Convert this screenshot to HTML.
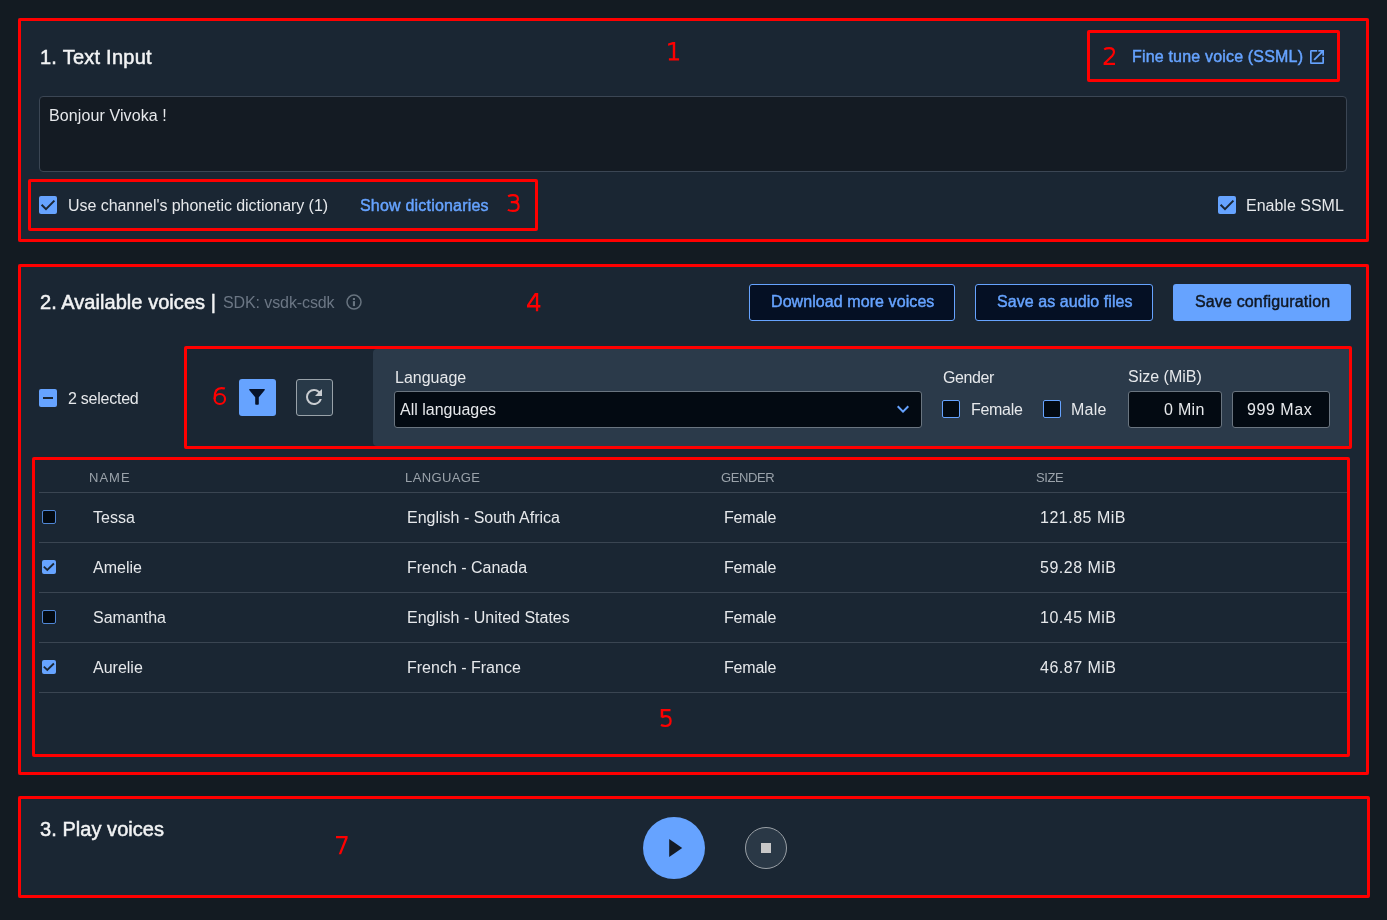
<!DOCTYPE html>
<html><head><meta charset="utf-8"><style>
html,body{margin:0;padding:0;}
body{width:1387px;height:920px;background:#131b22;position:relative;overflow:hidden;font-family:"Liberation Sans",sans-serif;}
body>div{position:absolute;}
.t{white-space:pre;line-height:1;will-change:transform;}
</style></head><body>
<div style="left:18px;top:18px;width:1351px;height:224px;background:#1a2633;"></div>
<div style="left:18px;top:264px;width:1351px;height:511px;background:#1a2633;"></div>
<div style="left:18px;top:796px;width:1351px;height:102px;background:#1a2633;"></div>
<div class="t" style="left:40px;top:47.27px;font-size:20px;color:#f2f3f4;-webkit-text-stroke:0.5px;letter-spacing:0.25px;">1. Text Input</div>
<div class="t" style="left:1131.5px;top:49.46px;font-size:16px;color:#66a3ff;-webkit-text-stroke:0.45px;letter-spacing:0.18px;">Fine tune voice (SSML)</div>
<svg style="position:absolute;left:1310px;top:50px" width="14" height="14" viewBox="3 3 18 18"><path fill="#66a3ff" stroke="#66a3ff" stroke-width="0.45" d="M14 3v2h3.59l-9.83 9.83 1.41 1.41L19 6.41V10h2V3m-2 16H5V5h7V3H5c-1.11 0-2 .9-2 2v14a2 2 0 002 2h14a2 2 0 002-2v-7h-2v7z"/></svg>
<div style="left:39px;top:96px;width:1308px;height:76px;background:#141b23;border:1px solid #3b4654;border-radius:4px;box-sizing:border-box;"></div>
<div class="t" style="left:48.6px;top:107.66px;font-size:16px;color:#e6e8eb;letter-spacing:0.1px;">Bonjour Vivoka !</div>
<div style="left:39px;top:196px;width:18px;height:18px;background:#66a3ff;border-radius:2px;"></div>
<svg style="position:absolute;left:39px;top:196px" width="18" height="18" viewBox="0 0 18 18"><path d="M2.6 8.8 L7 13.2 L15.4 4.6" fill="none" stroke="#1a2633" stroke-width="2.0" /></svg>
<div class="t" style="left:67.5px;top:197.66px;font-size:16px;color:#e6e8eb;letter-spacing:-0.05px;">Use channel's phonetic dictionary (1)</div>
<div class="t" style="left:360.3px;top:197.96px;font-size:16px;color:#66a3ff;-webkit-text-stroke:0.45px;letter-spacing:0.2px;">Show dictionaries</div>
<div style="left:1218px;top:196px;width:18px;height:18px;background:#66a3ff;border-radius:2px;"></div>
<svg style="position:absolute;left:1218px;top:196px" width="18" height="18" viewBox="0 0 18 18"><path d="M2.6 8.8 L7 13.2 L15.4 4.6" fill="none" stroke="#1a2633" stroke-width="2.0" /></svg>
<div class="t" style="left:1246.4px;top:197.66px;font-size:16px;color:#e6e8eb;">Enable SSML</div>
<div class="t" style="left:39.6px;top:292.07px;font-size:20px;color:#f2f3f4;-webkit-text-stroke:0.5px;letter-spacing:0.05px;">2. Available voices |</div>
<div class="t" style="left:222.8px;top:295.46px;font-size:16px;color:#6b7684;letter-spacing:-0.1px;">SDK: vsdk-csdk</div>
<svg style="position:absolute;left:345px;top:293px" width="18" height="18" viewBox="0 0 18 18"><circle cx="9" cy="9.1" r="7.0" fill="none" stroke="#67737f" stroke-width="1.5"/><rect x="7.9" y="5" width="2.1" height="2" fill="#67737f"/><rect x="7.9" y="8.1" width="2.1" height="5" fill="#67737f"/></svg>
<div style="left:749px;top:284px;width:206px;height:37px;background:#051024;border:1px solid #66a3ff;border-radius:3px;box-sizing:border-box;"></div>
<div class="t" style="left:770.5px;top:294.46px;font-size:16px;color:#66a3ff;-webkit-text-stroke:0.45px;letter-spacing:0.08px;">Download more voices</div>
<div style="left:975px;top:284px;width:178px;height:37px;background:#051024;border:1px solid #66a3ff;border-radius:3px;box-sizing:border-box;"></div>
<div class="t" style="left:996.5px;top:294.46px;font-size:16px;color:#66a3ff;-webkit-text-stroke:0.45px;letter-spacing:0.07px;">Save as audio files</div>
<div style="left:1173px;top:284px;width:178px;height:37px;background:#66a3ff;border-radius:3px;"></div>
<div class="t" style="left:1194.5px;top:294.46px;font-size:16px;color:#101824;-webkit-text-stroke:0.45px;letter-spacing:0.15px;">Save configuration</div>
<div style="left:39px;top:389px;width:18px;height:18px;background:#66a3ff;border-radius:2px;"></div>
<div style="left:43px;top:397px;width:10px;height:2px;background:#1a2633;"></div>
<div class="t" style="left:67.6px;top:391.06px;font-size:16px;color:#e6e8eb;letter-spacing:-0.25px;">2 selected</div>
<div style="left:373px;top:349px;width:976px;height:97px;background:#2b3a4a;border-radius:4px 0 0 4px;"></div>
<div style="left:239px;top:379px;width:37px;height:37px;background:#66a3ff;border-radius:3px;"></div>
<svg style="position:absolute;left:244px;top:384px" width="26" height="26" viewBox="0 0 26 26"><path fill="#07132a" d="M5.7 5.1 H20.3 Q21.1 5.1 20.8 6.0 L14.8 13.3 V20.0 Q14.8 20.8 14.0 20.8 H12.0 Q11.2 20.8 11.2 20.0 V13.3 L5.2 6.0 Q4.9 5.1 5.7 5.1 Z"/></svg>
<div style="left:296px;top:379px;width:37px;height:37px;background:#283948;border:1px solid #99a2a9;border-radius:3px;box-sizing:border-box;"></div>
<svg style="position:absolute;left:301.7px;top:384.7px" width="24" height="24" viewBox="0 0 24 24"><path fill="#c9cdd1" d="M17.65 6.35A7.958 7.958 0 0012 4a8 8 0 00-8 8 8 8 0 008 8c3.73 0 6.84-2.55 7.73-6h-2.08A5.99 5.99 0 0112 18a6 6 0 01-6-6 6 6 0 016-6c1.66 0 3.14.69 4.22 1.78L13 11h7V4l-2.35 2.35z"/></svg>
<div class="t" style="left:394.6px;top:369.56px;font-size:16px;color:#e6e8eb;">Language</div>
<div style="left:394px;top:391px;width:528px;height:37px;background:#030a12;border:1px solid #6a7580;border-radius:3px;box-sizing:border-box;"></div>
<div class="t" style="left:399.7px;top:401.76px;font-size:16px;color:#e6e8eb;">All languages</div>
<svg style="position:absolute;left:891px;top:397px" width="24" height="24" viewBox="0 0 24 24"><path fill="#66a3ff" d="M7.41 8.58L12 13.17l4.59-4.59L18 10l-6 6-6-6 1.41-1.42z"/></svg>
<div class="t" style="left:942.5px;top:369.56px;font-size:16px;color:#e6e8eb;letter-spacing:-0.4px;">Gender</div>
<div style="left:942px;top:400px;width:18px;height:18px;background:#030a12;border:1.5px solid #66a3ff;border-radius:2px;box-sizing:border-box;"></div>
<div class="t" style="left:970.6px;top:402.06px;font-size:16px;color:#e6e8eb;letter-spacing:-0.3px;">Female</div>
<div style="left:1043px;top:400px;width:18px;height:18px;background:#030a12;border:1.5px solid #66a3ff;border-radius:2px;box-sizing:border-box;"></div>
<div class="t" style="left:1071.4px;top:402.06px;font-size:16px;color:#e6e8eb;letter-spacing:0.2px;">Male</div>
<div class="t" style="left:1128.4px;top:369.36px;font-size:16px;color:#e6e8eb;">Size (MiB)</div>
<div style="left:1128px;top:391px;width:94px;height:37px;background:#030a12;border:1px solid #6a7580;border-radius:3px;box-sizing:border-box;"></div>
<div class="t" style="left:1163.5px;top:401.76px;font-size:16px;color:#e6e8eb;letter-spacing:0.3px;">0 Min</div>
<div style="left:1232px;top:391px;width:98px;height:37px;background:#030a12;border:1px solid #6a7580;border-radius:3px;box-sizing:border-box;"></div>
<div class="t" style="left:1247.4px;top:401.76px;font-size:16px;color:#e6e8eb;letter-spacing:0.55px;">999 Max</div>
<div class="t" style="left:89.0px;top:471.00px;font-size:13px;color:#9aa2aa;letter-spacing:1.0px;">NAME</div>
<div class="t" style="left:404.8px;top:471.00px;font-size:13px;color:#9aa2aa;letter-spacing:0.4px;">LANGUAGE</div>
<div class="t" style="left:721.2px;top:471.00px;font-size:13px;color:#9aa2aa;letter-spacing:-0.4px;">GENDER</div>
<div class="t" style="left:1036.2px;top:471.00px;font-size:13px;color:#9aa2aa;letter-spacing:-0.4px;">SIZE</div>
<div style="left:39px;top:492px;width:1311px;height:1px;background:#3a4552;"></div>
<div style="left:39px;top:542px;width:1311px;height:1px;background:#3a4552;"></div>
<div style="left:39px;top:592px;width:1311px;height:1px;background:#3a4552;"></div>
<div style="left:39px;top:642px;width:1311px;height:1px;background:#3a4552;"></div>
<div style="left:39px;top:692px;width:1311px;height:1px;background:#3a4552;"></div>
<div style="left:42px;top:510px;width:14px;height:14px;background:#030a12;border:1.2px solid #4f86d6;border-radius:2px;box-sizing:border-box;"></div>
<div class="t" style="left:92.5px;top:510.06px;font-size:16px;color:#e6e8eb;">Tessa</div>
<div class="t" style="left:407.4px;top:510.06px;font-size:16px;color:#e6e8eb;">English - South Africa</div>
<div class="t" style="left:723.5px;top:510.06px;font-size:16px;color:#e6e8eb;letter-spacing:-0.2px;">Female</div>
<div class="t" style="left:1040.2px;top:510.06px;font-size:16px;color:#e6e8eb;letter-spacing:0.5px;">121.85 MiB</div>
<div style="left:42px;top:560px;width:14px;height:14px;background:#66a3ff;border-radius:2px;"></div>
<svg style="position:absolute;left:42px;top:560px" width="14" height="14" viewBox="0 0 14 14"><path d="M1.8 6.6 L5.3 10 L11.9 3.5" fill="none" stroke="#1a2633" stroke-width="1.8"/></svg>
<div class="t" style="left:92.5px;top:560.06px;font-size:16px;color:#e6e8eb;">Amelie</div>
<div class="t" style="left:407.4px;top:560.06px;font-size:16px;color:#e6e8eb;">French - Canada</div>
<div class="t" style="left:723.5px;top:560.06px;font-size:16px;color:#e6e8eb;letter-spacing:-0.2px;">Female</div>
<div class="t" style="left:1040.2px;top:560.06px;font-size:16px;color:#e6e8eb;letter-spacing:0.5px;">59.28 MiB</div>
<div style="left:42px;top:610px;width:14px;height:14px;background:#030a12;border:1.2px solid #4f86d6;border-radius:2px;box-sizing:border-box;"></div>
<div class="t" style="left:92.5px;top:610.06px;font-size:16px;color:#e6e8eb;">Samantha</div>
<div class="t" style="left:407.4px;top:610.06px;font-size:16px;color:#e6e8eb;">English - United States</div>
<div class="t" style="left:723.5px;top:610.06px;font-size:16px;color:#e6e8eb;letter-spacing:-0.2px;">Female</div>
<div class="t" style="left:1040.2px;top:610.06px;font-size:16px;color:#e6e8eb;letter-spacing:0.5px;">10.45 MiB</div>
<div style="left:42px;top:660px;width:14px;height:14px;background:#66a3ff;border-radius:2px;"></div>
<svg style="position:absolute;left:42px;top:660px" width="14" height="14" viewBox="0 0 14 14"><path d="M1.8 6.6 L5.3 10 L11.9 3.5" fill="none" stroke="#1a2633" stroke-width="1.8"/></svg>
<div class="t" style="left:92.5px;top:660.06px;font-size:16px;color:#e6e8eb;">Aurelie</div>
<div class="t" style="left:407.4px;top:660.06px;font-size:16px;color:#e6e8eb;">French - France</div>
<div class="t" style="left:723.5px;top:660.06px;font-size:16px;color:#e6e8eb;letter-spacing:-0.2px;">Female</div>
<div class="t" style="left:1040.2px;top:660.06px;font-size:16px;color:#e6e8eb;letter-spacing:0.5px;">46.87 MiB</div>
<div class="t" style="left:39.5px;top:819.07px;font-size:20px;color:#f2f3f4;-webkit-text-stroke:0.5px;letter-spacing:0.05px;">3. Play voices</div>
<div style="left:643px;top:817px;width:62px;height:62px;background:#66a3ff;border-radius:50%;"></div>
<svg style="position:absolute;left:669px;top:839px" width="14" height="18" viewBox="0 0 14 18"><path fill="#141b24" d="M0.2 0 L13.2 9 L0.2 18 Z"/></svg>
<div style="left:745px;top:826.5px;width:42px;height:42px;background:#2a3846;border:1px solid #9aa0a6;border-radius:50%;box-sizing:border-box;"></div>
<div style="left:761px;top:843px;width:10px;height:10px;background:#c8c8c8;"></div>
<div style="left:18px;top:18px;width:1351px;height:224px;border:3px solid #ff0000;border-radius:2px;box-sizing:border-box;"></div>
<div style="left:1087px;top:30px;width:253px;height:52px;border:3px solid #ff0000;border-radius:2px;box-sizing:border-box;"></div>
<div style="left:28px;top:179px;width:510px;height:52px;border:3px solid #ff0000;border-radius:2px;box-sizing:border-box;"></div>
<div style="left:18px;top:264px;width:1351px;height:511px;border:3px solid #ff0000;border-radius:2px;box-sizing:border-box;"></div>
<div style="left:184px;top:346px;width:1168px;height:103px;border:3px solid #ff0000;border-radius:2px;box-sizing:border-box;"></div>
<div style="left:32px;top:457px;width:1318px;height:300px;border:3px solid #ff0000;border-radius:2px;box-sizing:border-box;"></div>
<div style="left:18px;top:796px;width:1352px;height:102px;border:3px solid #ff0000;border-radius:2px;box-sizing:border-box;"></div>
<svg style="position:absolute;left:668px;top:41.7px" width="12" height="19" viewBox="0 0 12 19"><path fill="#ff0000" d="M4.8 0 H7.2 V16.2 H11.1 V18.4 H0.9 V16.2 H4.8 V2.5 L0.1 3.7 V1.5 Z"/></svg>
<svg style="position:absolute;left:1098px;top:42px" width="24" height="28" viewBox="0 0 24 28"><path fill="none" stroke="#ff0000" stroke-width="2.15" d="M6.2 7.3 C7.5 6.5 9.4 6.1 11.2 6.1 C14.1 6.1 15.95 7.8 15.95 10.1 C15.95 11.5 15.4 12.5 14.3 13.7 L6.4 21.6"/><rect x="5.6" y="20.8" width="11.4" height="2.2" fill="#ff0000"/><path fill="#ff0000" d="M5.6 20.8 L7.5 19.8 L8.8 20.9 Z"/></svg>
<svg style="position:absolute;left:502px;top:189px" width="24" height="28" viewBox="0 0 24 28"><path fill="none" stroke="#ff0000" stroke-width="2.15" d="M6.1 7.3 C7.6 6.5 9.3 6.1 11 6.1 C14 6.1 15.9 7.6 15.9 9.8 C15.9 11.8 14.3 13.1 11.5 13.1 H8.8 M11.5 13.1 C14.8 13.1 16.6 14.8 16.6 17.4 C16.6 20.3 14.4 21.9 10.8 21.9 C9.0 21.9 7.3 21.6 5.8 20.9"/></svg>
<svg style="position:absolute;left:526.8px;top:292.8px" width="14" height="19" viewBox="0 0 14 19"><path fill="#ff0000" fill-rule="evenodd" d="M7.9 0 H11.2 V11.9 H13.4 V14.4 H11.2 V18.3 H8.9 V14.4 H0 V11.9 Z M8.9 2.9 V11.9 H2.6 Z"/></svg>
<svg style="position:absolute;left:659.7px;top:708.9px" width="12" height="19" viewBox="0 0 12 19"><path fill="#ff0000" d="M0.7 0 H10.5 V2.3 H3.2 V8.6 H0.7 Z"/><path fill="none" stroke="#ff0000" stroke-width="2.2" d="M2.0 8.3 C3.3 7.6 4.6 7.2 5.9 7.2 C9 7.2 10.6 9.2 10.6 12.1 C10.6 15.1 8.6 17.0 5.4 17.0 C3.7 17.0 2.1 16.7 0.9 16.1"/></svg>
<svg style="position:absolute;left:208px;top:382px" width="24" height="28" viewBox="0 0 24 28"><ellipse cx="11.85" cy="17" rx="5.2" ry="5.0" fill="none" stroke="#ff0000" stroke-width="2.15"/><path fill="none" stroke="#ff0000" stroke-width="2.15" d="M16.9 6.6 C15.8 6.2 14.6 6.1 13.4 6.1 C9.2 6.1 6.65 9.2 6.65 15.5 L6.65 17"/></svg>
<svg style="position:absolute;left:335.8px;top:835.9px" width="12" height="19" viewBox="0 0 12 19"><path fill="#ff0000" d="M0 0 H11.6 V2.2 L5.1 18.2 H2.7 L9.1 2.3 H0 Z"/></svg>
</body></html>
